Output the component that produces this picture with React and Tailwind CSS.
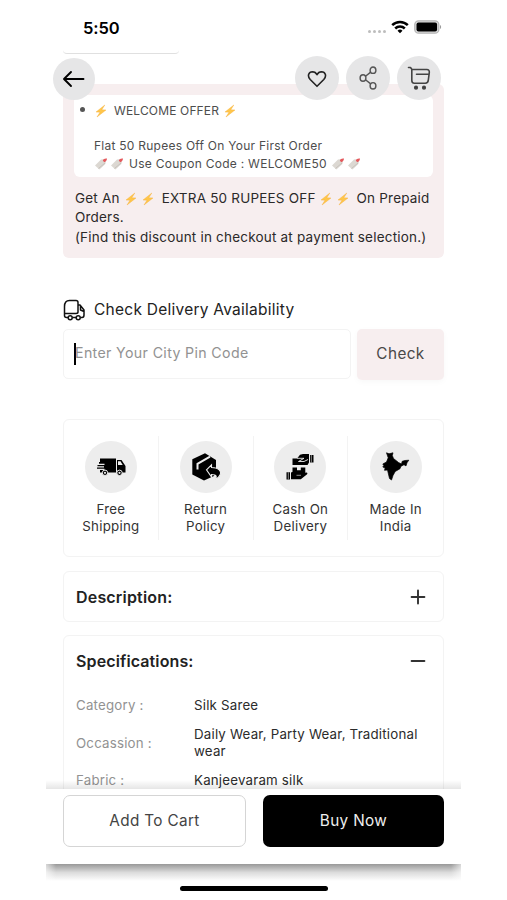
import { Plus, Minus } from 'lucide-react';

const specs = [
  { label: 'Category :', value: 'Silk Saree' },
  { label: 'Occassion :', value: 'Daily Wear, Party Wear, Traditional wear' },
  { label: 'Fabric :', value: 'Kanjeevaram silk' },
];

function Bolt() {
  return (
    <svg viewBox="0 0 14 14" className="inline-block w-[14px] h-[14px]">
      <path d="M10.8 1 2 8l4 .2L3 13l9-7-4.200-.2z" fill="#ffc64a" stroke="#f6ad3a" strokeWidth=".4" />
    </svg>
  );
}

function Tag() {
  return (
    <svg viewBox="0 0 14 14" className="inline-block w-[14px] h-[14px] mt-px">
      <path d="m1 8.500 6-6 4-.5 1.200 1-.8 4-6 5.500z" fill="#dcd8d2" />
      <path d="m4.500 11.500 6.500-5.500" stroke="#bdb8b1" strokeWidth=".7" />
      <path d="M8.800 3.800c.5-2 2.200-2.600 4.200-2.300-.1 1.700-1 2.900-2.500 3.800z" fill="#e5585c" />
    </svg>
  );
}

function StatusBar() {
  return (
    <div className="h-[49px] shrink-0 relative z-10 flex items-start justify-between pl-[37px] pr-[19px] pt-[18px]">
      <span className="text-[16.500px] leading-[20px] font-semibold text-black tracking-[-0.1px]">5:50</span>
      <div className="flex items-center h-[18px]">
        <div className="flex gap-[2px] mr-[5px] mt-[9px]">
          <i className="size-[3px] rounded-full bg-[#bdbdbd]" />
          <i className="size-[3px] rounded-full bg-[#bdbdbd]" />
          <i className="size-[3px] rounded-full bg-[#bdbdbd]" />
          <i className="size-[3px] rounded-full bg-[#bdbdbd]" />
        </div>
        <svg viewBox="0 0 18 14" className="w-[18px] h-[14px]" fill="none" stroke="#000" strokeWidth="2.500">
          <path d="M1.200 5.200a11 11 0 0 1 15.600 0M4.200 8.500a6.800 6.800 0 0 1 9.600 0" />
          <path d="M9 13.300 6.500 10.800a3.600 3.600 0 0 1 5 0z" fill="#000" stroke="none" />
        </svg>
        <svg viewBox="0 0 28 14" className="w-[28px] h-[14px] ml-[5px]">
          <rect x=".8" y=".8" width="24" height="12.400" rx="3.800" fill="#ddd" stroke="#b5b5b5" strokeWidth="1.300" />
          <rect x="2.500" y="2.500" width="20.600" height="9" rx="2" />
          <path d="M26 5v4c1.500-.6 1.500-3.400 0-4z" fill="#999" />
        </svg>
      </div>
    </div>
  );
}

function RoundButton({ children }) {
  return (
    <button className="size-[44px] rounded-full bg-[#e6e6e7] flex items-center justify-center text-[#222]">
      {children}
    </button>
  );
}

function FloatingNav() {
  return (
    <div className="absolute z-10 top-[56px] left-[7px] right-[20px] flex items-center justify-between">
      <button className="size-[42px] mt-px rounded-full bg-[#e6e6e7] flex items-center justify-center">
        <svg viewBox="0 0 24 24" className="size-[24px]" fill="none" stroke="#000" strokeWidth="1.900" strokeLinecap="round" strokeLinejoin="round">
          <path d="M21.500 12H2.200M9 5l-7 7 7 7" />
        </svg>
      </button>
      <div className="flex gap-[7px]">
        <RoundButton>
          <svg viewBox="0 0 20 20" className="size-[20px] mt-[2px]" fill="none" stroke="currentColor" strokeWidth="1.600" strokeLinejoin="round">
            <path d="M10 17.300 3.200 10.500C-.1 7 1.800 2.800 5.500 2.700c2 0 3.600 1.100 4.500 3 .9-1.900 2.500-3 4.500-3 3.700.1 5.600 4.300 2.300 7.800z" />
          </svg>
        </RoundButton>
        <RoundButton>
          <svg viewBox="0 0 20 24" className="w-[20px] h-[24px]" fill="none" stroke="#555" strokeWidth="1.400">
            <ellipse cx="5" cy="12" rx="2.900" ry="3.200" />
            <ellipse cx="15" cy="4.200" rx="2.900" ry="3.200" />
            <ellipse cx="15" cy="19.800" rx="2.900" ry="3.200" />
            <path d="m7.500 10.300 5.200-4.200M7.500 13.700l5.200 4.200" />
          </svg>
        </RoundButton>
        <RoundButton>
          <svg viewBox="0 0 24 24" className="size-[24px]" fill="none" stroke="#444" strokeWidth="1.600" strokeLinecap="round" strokeLinejoin="round">
            <path d="M1.500 1.500h2l1.300 1.700v11c0 2 .7 3 2.500 3h11c2 0 2.800-1 3-3l1-7.500c.2-2-.5-3.200-2.500-3.200h-15M9.500 8.200h12.500" />
            <circle cx="9" cy="21.700" r="1.300" fill="#333" />
            <circle cx="17" cy="21.700" r="1.300" fill="#333" />
          </svg>
        </RoundButton>
      </div>
    </div>
  );
}

function OfferPanel() {
  return (
    <section className="mt-[30px] h-[174px] rounded-[6px] bg-[#f7eeef] px-[11px] pt-[11px]">
      <div className="h-[82px] rounded-[6px] bg-white relative pl-[20px] pt-[7px] text-[12px] leading-[17.500px] text-[#4d4d4d] whitespace-nowrap">
        <span className="absolute left-[6px] top-[12px] size-[5px] rounded-full bg-[#555]" />
        <p className="flex items-center">
          <Bolt /><span className="ml-[6px] mr-[4px] tracking-[0.150px]">WELCOME OFFER</span><Bolt />
        </p>
        <p className="mt-[17.500px] tracking-[0.250px]">Flat 50 Rupees Off On Your First Order</p>
        <p className="flex items-center">
          <Tag /><span className="w-[2px]" /><Tag />
          <span className="ml-[5px] mr-[4px] tracking-[0.270px]">Use Coupon Code : WELCOME50</span>
          <Tag /><span className="w-[2px]" /><Tag />
        </p>
      </div>
      <div className="mt-[12px] pl-[1px] text-[13.500px] leading-[19.300px] tracking-[0.2px] text-[#2b2929] whitespace-nowrap">
        <p className="flex items-center">
          Get An<span className="w-[4px]" /><Bolt /><span className="w-[3px]" /><Bolt />
          <span className="ml-[7px] mr-[3px]">EXTRA 50 RUPEES OFF</span>
          <Bolt /><span className="w-[3px]" /><Bolt />
          <span className="ml-[7px]">On Prepaid</span>
        </p>
        <p>Orders.</p>
        <p>(Find this discount in checkout at payment selection.)</p>
      </div>
    </section>
  );
}

function DeliveryCheck() {
  return (
    <section className="mt-[40px]">
      <h2 className="h-[24px] flex items-center text-[15.500px] tracking-[0.250px] text-[#222]">
        <svg viewBox="0 0 22 22" className="size-[22px] mr-[9px]" fill="none" stroke="#111" strokeWidth="1.500" strokeLinejoin="round">
          <path d="M5 18.500H3.500c-1.500 0-2-1-2-2v-9c0-4 1-6 5-6h6.500c1.500 0 2 1 2 2V13c0 1-1 1.500-2 1.500H1.500" />
          <path d="M15 6h2l4 5v5c0 1.500-.7 2.500-2 2.500h-1.500M9.500 18.500h3.500M17.500 7v4l3.500 1.500" />
          <circle cx="7.200" cy="18.700" r="2" />
          <circle cx="15.200" cy="18.700" r="2" />
        </svg>
        Check Delivery Availability
      </h2>
      <div className="mt-[7px] flex gap-[6px]">
        <div className="w-[288px] h-[50px] rounded-[5px] border border-[#f3f3f3] flex items-center pl-[10px]">
          <span className="w-[2px] h-[22px] bg-black" />
          <span className="-ml-px -mt-[2px] text-[14.200px] tracking-[0.350px] text-[#929292]">Enter Your City Pin Code</span>
        </div>
        <button className="flex-1 h-[51px] rounded-[5px] bg-[#f7eeef] text-[15.300px] tracking-[0.4px] text-[#4a4848] shadow-[0_2px_6px_rgba(0,0,0,0.03)]">
          Check
        </button>
      </div>
    </section>
  );
}

function VanIcon() {
  return (
    <svg viewBox="0 0 30 20" className="w-[30px] h-[20px]">
      <path d="M4 1.500h16v14H4v-2.500h4.500v-1.200H1v-1.300h7V9.300H1.500V8h7V6.800H3V5h1zM21 3h4.500l3 4.500 1 1.500v6.500H21z" />
      <path d="M22 4.300h2.500l2.200 3.700H22z" fill="#ededed" />
      <circle cx="9" cy="15.800" r="2.700" stroke="#ededed" />
      <circle cx="23.500" cy="15.800" r="2.700" stroke="#ededed" />
      <circle cx="9" cy="15.800" r="1.100" fill="#ededed" />
      <circle cx="23.500" cy="15.800" r="1.100" fill="#ededed" />
    </svg>
  );
}

function ReturnIcon() {
  return (
    <svg viewBox="0 0 30 30" className="size-[30px]">
      <path d="M14 1.300 1.300 7.300V22.500L13 28.500l10-4.500 2-8V8z" />
      <path d="M6.500 17.500v-5.700L19 4.700" stroke="#ededed" strokeWidth="2" fill="none" />
      <path d="m15.500 17.800 5-5v2.700c7 .2 10.500 3.200 8.500 7.500-.8 2-2.200 3.300-5 4.500 1.800-2.500 2.200-5-3.500-5v2.500z" stroke="#ededed" strokeWidth="1.100" />
    </svg>
  );
}

function CashIcon() {
  return (
    <svg viewBox="0 0 30 30" className="size-[30px]">
      <path d="M7.500 6.500h4.500l3-3.700 3-.8h6v8.500l-1.500 2.500h-15zM25 3h3.500v7.500H25z" />
      <path d="M12 6.300h7l-5.500 3.200h5.500l4-2" stroke="#ededed" strokeWidth=".9" fill="none" />
      <path d="M26.300 3v7.500" stroke="#ededed" strokeWidth=".6" />
      <path d="M7.500 15.500H12v2.800h3.800v-2.800h4.500V22H7.500z" />
      <path d="M1.500 20.300H5v7.200H1.500zM6 20.500c2.500-1.300 4.500-.8 6.500 1h3.500l5.500-1c1 .3 1.200 1.200.3 2l-6 4.800H6z" />
      <path d="M11.500 23.300h4.500M3.300 20.300v7" stroke="#ededed" strokeWidth=".6" />
    </svg>
  );
}

function IndiaIcon() {
  return (
    <svg viewBox="0 0 28 30" className="w-[28px] h-[30px]">
      <path d="M4.500.8 7 1.800 11 .8 10.300 3.500l1.200 3 5 4 3 1.500.7-2.700L23 8.500l3.800-.3-1.800 2.500-1 3.200-2-1.200-3 1.500-1 2.500-4.800 2.800-2.200 4L9.500 28l-2-1.500L5.500 18l-3 .3.700-2.300-2.400-1 1-1.500-1-1.500L4.500 10l1.700-4.200z" stroke="#000" strokeWidth=".7" strokeLinejoin="round" />
    </svg>
  );
}

const features = [
  { icon: VanIcon, first: 'Free', second: 'Shipping' },
  { icon: ReturnIcon, first: 'Return', second: 'Policy' },
  { icon: CashIcon, first: 'Cash On', second: 'Delivery' },
  { icon: IndiaIcon, first: 'Made In', second: 'India' },
];

function Features() {
  return (
    <section className="mt-[39px] h-[138px] rounded-[6px] border border-[#f3f3f3] grid grid-cols-4 py-[16px]">
      {features.map(({ icon: Icon, first, second }) => (
        <div key={first} className="flex flex-col items-center pt-[5px] border-r border-[#f3f3f3] last:border-r-0">
          <div className="size-[52px] rounded-full bg-[#ededed] flex items-center justify-center">
            <Icon />
          </div>
          <p className="mt-[8px] text-center text-[13.300px] leading-[17px] tracking-[0.280px] text-[#333]">
            {first}
            <br />
            {second}
          </p>
        </div>
      ))}
    </section>
  );
}

function Specifications() {
  return (
    <section className="mt-[13px] h-[180px] rounded-[6px] border border-[#f3f3f3] px-[12px]">
      <div className="h-[50px] flex items-center justify-between pr-[2px]">
        <h2 className="text-[16px] font-semibold tracking-[0.120px] text-[#222]">Specifications:</h2>
        <Minus size={22} strokeWidth={2.1} color="#333" />
      </div>
      <dl className="mt-[11px] flex flex-col gap-[12px] text-[13.300px] leading-[17px] tracking-[0.2px]">
        {specs.map((row) => (
          <div key={row.label} className="flex items-center">
            <dt className="w-[118px] shrink-0 text-[#929292]">{row.label}</dt>
            <dd className="w-[232px] text-[#2b2b2b]">{row.value}</dd>
          </div>
        ))}
      </dl>
    </section>
  );
}

export default function App() {
  return (
    <div className="w-[507px] h-[900px] bg-white overflow-hidden font-['Inter',sans-serif]">
      <div className="relative ml-[46px] w-[415px] h-[900px] flex flex-col">
        <StatusBar />
        <FloatingNav />
        <main className="h-[740px] shrink-0 overflow-hidden px-[17px]">
          <div className="w-[116px] h-[5px] rounded-b-[4px] border-b border-[#e0e0e0]" />
          <OfferPanel />
          <DeliveryCheck />
          <Features />
          <section className="mt-[14px] h-[51px] rounded-[6px] border border-[#f3f3f3] pl-[12px] pr-[14px] flex items-center justify-between">
            <h2 className="text-[16px] font-semibold tracking-[0.180px] text-[#222]">Description:</h2>
            <Plus size={22} strokeWidth={2.1} color="#333" />
          </section>
          <Specifications />
        </main>
        <div className="relative h-[75px] shrink-0 bg-white flex gap-[17px] px-[17px] pt-[6px] text-[15.300px] tracking-[0.350px]">
          <div className="absolute inset-x-0 -top-[9px] h-[9px] bg-linear-to-b from-transparent to-black/10" />
          <button className="flex-1 h-[52px] pt-px rounded-[7px] border border-[#d5d5d5] text-[#444]">Add To Cart</button>
          <button className="flex-1 h-[52px] pt-px rounded-[7px] bg-black text-[#eee]">Buy Now</button>
        </div>
        <div className="relative h-[36px] bg-white flex justify-center">
          <div className="absolute inset-x-0 top-0 h-[17px] bg-linear-to-b from-[#999] via-[#dcdcdc] to-white" />
          <div className="absolute left-0 top-0 w-[10px] h-[17px] bg-linear-to-r from-white/60 to-transparent" />
          <div className="absolute right-0 top-0 w-[10px] h-[17px] bg-linear-to-l from-white/60 to-transparent" />
          <div className="relative mt-[22px] w-[148px] h-[5px] rounded-full bg-black" />
        </div>
      </div>
    </div>
  );
}
